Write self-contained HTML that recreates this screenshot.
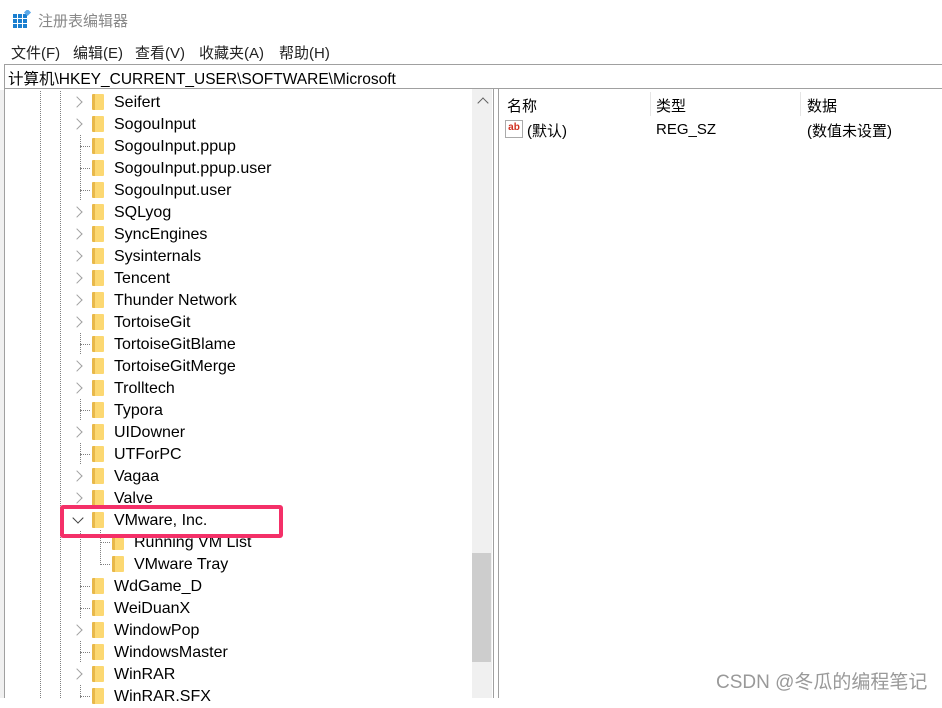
<!DOCTYPE html><html><head><meta charset="utf-8"><style>
*{margin:0;padding:0;box-sizing:border-box}
body{width:942px;height:698px;overflow:hidden;background:#fff;font-family:"Liberation Sans","Noto Sans CJK SC",sans-serif;font-size:15px;color:#000;position:relative}
.a{position:absolute;white-space:nowrap}
.r{position:absolute;height:22px;line-height:22px;font-size:16px}
.f{position:absolute;width:12px;height:16px;background:linear-gradient(90deg,#e8b84a 0 3px,#fcd872 3px);border-radius:1px}
.c{position:absolute;width:8px;height:8px;border-right:1.6px solid #a0a0a0;border-top:1.6px solid #a0a0a0;transform:rotate(45deg);background:transparent}
.dh{position:absolute;height:0;border-top:1px dotted #808080}
.dv{position:absolute;width:0;border-left:1px dotted #808080}
.m{position:absolute;left:76px;width:9px;height:22px;background:#fff}
</style></head><body>
<svg class="a" style="left:12px;top:10px" width="20" height="20"><g fill="#1a7fd0"><rect x="1" y="4" width="4" height="4"/><rect x="6" y="4" width="4" height="4"/><rect x="11" y="4" width="4" height="4"/><rect x="1" y="9" width="4" height="4"/><rect x="6" y="9" width="4" height="4"/><rect x="11" y="9" width="4" height="4"/><rect x="1" y="14" width="4" height="4"/><rect x="6" y="14" width="4" height="4"/><rect x="11" y="14" width="4" height="4"/></g><rect x="13" y="0" width="5" height="5" fill="#5aa8e8" transform="rotate(45 15.5 2.5)"/></svg>
<div class="a" style="left:38px;top:10px;font-size:15px;color:#888">注册表编辑器</div>
<div class="a" style="left:11px;top:42px;color:#222">文件(F)</div>
<div class="a" style="left:73px;top:42px;color:#222">编辑(E)</div>
<div class="a" style="left:135px;top:42px;color:#222">查看(V)</div>
<div class="a" style="left:199px;top:42px;color:#222">收藏夹(A)</div>
<div class="a" style="left:279px;top:42px;color:#222">帮助(H)</div>
<div class="a" style="left:4px;top:64px;width:938px;height:25px;border:1px solid #a0a0a0;border-right:none"></div>
<div class="a" style="left:8px;top:67px;color:#000;font-size:15.5px">计算机\HKEY_CURRENT_USER\SOFTWARE\Microsoft</div>
<div class="a" style="left:0;top:90px;width:4px;height:608px;background:#f0f0f0"></div>
<div class="a" style="left:4px;top:89px;width:1px;height:609px;background:#a0a0a0"></div>
<div class="a" style="left:472px;top:89px;width:20px;height:609px;background:#f0f0f0"></div>
<div class="a" style="left:472px;top:553px;width:19px;height:109px;background:#cdcdcd"></div>
<div class="c" style="left:479px;top:99px;transform:rotate(-45deg);border-color:#606060"></div>
<div class="a" style="left:493px;top:89px;width:1px;height:609px;background:#a0a0a0"></div>
<div class="a" style="left:498px;top:89px;width:1px;height:609px;background:#a0a0a0"></div>
<div class="dv" style="left:40px;top:91px;height:607px"></div>
<div class="dv" style="left:60px;top:91px;height:607px"></div>
<div class="dv" style="left:80px;top:91px;height:607px"></div>
<div class="a" style="left:650px;top:92px;width:1px;height:24px;background:#e5e5e5"></div>
<div class="a" style="left:800px;top:92px;width:1px;height:24px;background:#e5e5e5"></div>
<div class="a" style="left:507px;top:95px">名称</div>
<div class="a" style="left:656px;top:95px">类型</div>
<div class="a" style="left:807px;top:95px">数据</div>
<div class="a" style="left:505px;top:120px;width:18px;height:18px;border:1px solid #aaa;background:#fff;font-size:10px;font-weight:bold;color:#d03020;line-height:14px;text-align:center">ab</div>
<div class="a" style="left:527px;top:120px">(默认)</div>
<div class="a" style="left:656px;top:121px">REG_SZ</div>
<div class="a" style="left:807px;top:120px">(数值未设置)</div>
<div id="t"></div>
<div class="a" style="left:60px;top:505px;width:223px;height:33px;border:4px solid #f43068;border-radius:3px"></div>
<div class="a" style="left:716px;top:667px;font-size:19px;color:#999">CSDN @冬瓜的编程笔记</div>
<script>
var rows=[["Seifert",1],["SogouInput",1],["SogouInput.ppup",0],["SogouInput.ppup.user",0],["SogouInput.user",0],["SQLyog",1],["SyncEngines",1],["Sysinternals",1],["Tencent",1],["Thunder Network",1],["TortoiseGit",1],["TortoiseGitBlame",0],["TortoiseGitMerge",1],["Trolltech",1],["Typora",0],["UIDowner",1],["UTForPC",0],["Vagaa",1],["Valve",1],["VMware, Inc.",2],["Running VM List",3],["VMware Tray",3],["WdGame_D",0],["WeiDuanX",0],["WindowPop",1],["WindowsMaster",0],["WinRAR",1],["WinRAR.SFX",0]];
var h="";
rows.forEach(function(r,i){var y=91+22*i,c=y+11,ty=y+1;
if(r[1]==3){h+='<div class="dh" style="left:100px;top:'+c+'px;width:10px"></div><div class="f" style="left:112px;top:'+(c-8)+'px"></div><div class="r" style="left:134px;top:'+ty+'px">'+r[0]+'</div>';return;}
if(r[1]==1)h+='<div class="m" style="top:'+y+'px"></div><div class="c" style="left:73px;top:'+(c-4)+'px"></div>';
else if(r[1]==0)h+='<div class="dh" style="left:80px;top:'+c+'px;width:10px"></div>';
else h+='<div class="m" style="top:'+y+'px"></div><div class="c" style="left:74px;top:'+(c-6)+'px;transform:rotate(135deg);border-color:#404040"></div>';
h+='<div class="f" style="left:92px;top:'+(c-8)+'px"></div><div class="r" style="left:114px;top:'+ty+'px">'+r[0]+'</div>';});
h+='<div class="dv" style="left:100px;top:530px;height:35px"></div>';
document.getElementById("t").innerHTML=h;
</script>
</body></html>
